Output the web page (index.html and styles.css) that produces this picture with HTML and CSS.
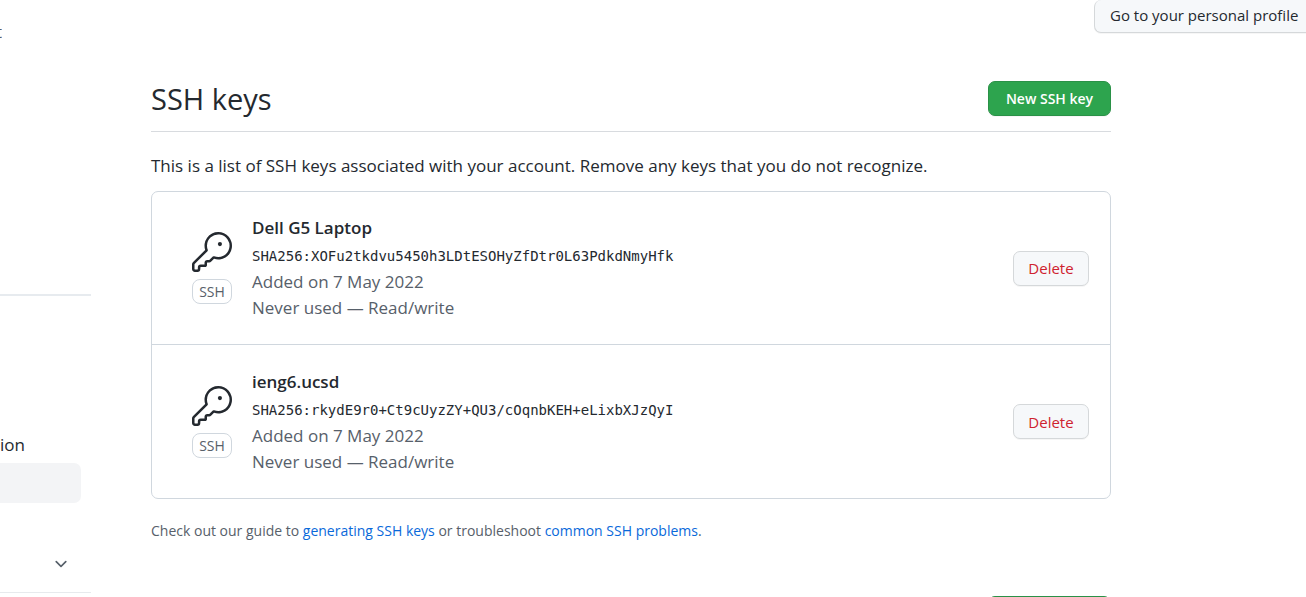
FILE: index.html
```html
<!DOCTYPE html>
<html lang="en">
<head>
<meta charset="utf-8">
<meta name="viewport" content="width=device-width, initial-scale=1">
<title>SSH keys</title>
<link rel="stylesheet" href="styles.css">
</head>
<body>
<header class="profile-bar">
  <span class="profile-note">t</span>
  <button class="btn profile-btn" type="button">Go to your personal profile</button>
</header>
<div class="layout">
  <nav class="sidebar" aria-label="Settings">
    <a class="nav-item" href="#">ion</a>
    <a class="nav-item nav-current" href="#" aria-label="SSH keys" aria-current="page"></a>
    <button class="nav-toggle" type="button" aria-label="Expand section">
      <svg class="chevron" viewBox="0 0 16 16" aria-hidden="true"><path d="M12.78 6.22a.75.75 0 010 1.06l-4.25 4.25a.75.75 0 01-1.06 0L3.22 7.28a.75.75 0 011.06-1.06L8 9.94l3.72-3.72a.75.75 0 011.06 0z"/></svg>
    </button>
  </nav>
  <main class="content">
    <div class="subhead">
      <h1 class="title">SSH keys</h1>
      <button class="btn btn-primary" type="button">New SSH key</button>
    </div>
    <p class="intro">This is a list of SSH keys associated with your account. Remove any keys that you do not recognize.</p>
    <ul class="key-list">
      <li class="key">
        <div class="key-type">
          <svg class="key-icon" viewBox="0 0 24 24" aria-hidden="true"><path d="M16.75 8.5a1.25 1.25 0 100-2.5 1.25 1.25 0 000 2.5z"/><path fill-rule="evenodd" d="M15.75 0a8.25 8.25 0 00-7.851 10.79L.513 18.178A1.75 1.75 0 000 19.414v2.836C0 23.217.784 24 1.75 24h1.5A1.75 1.75 0 005 22.25v-1a.25.25 0 01.25-.25h2.735a.75.75 0 00.545-.22l.214-.213A.875.875 0 009 19.948V18.5a.25.25 0 01.25-.25h1.086c.464 0 .91-.184 1.237-.513l1.636-1.636A8.25 8.25 0 1015.75 0zM9 8.25a6.75 6.75 0 114.288 6.287.75.75 0 00-.804.168l-1.971 1.972a.25.25 0 01-.177.073H9.25A1.75 1.75 0 007.5 18.5v1H5.25a1.75 1.75 0 00-1.75 1.75v1a.25.25 0 01-.25.25h-1.5a.25.25 0 01-.25-.25v-2.836a.25.25 0 01.073-.177l7.722-7.721a.75.75 0 00.168-.804A6.73 6.73 0 019 8.25z"/></svg>
          <span class="label">SSH</span>
        </div>
        <div class="key-info">
          <strong class="key-name">Dell G5 Laptop</strong>
          <code class="key-hash">SHA256:XOFu2tkdvu5450h3LDtESOHyZfDtr0L63PdkdNmyHfk</code>
          <span>Added on 7 May 2022</span>
          <span>Never used — Read/write</span>
        </div>
        <button class="btn btn-danger" type="button">Delete</button>
      </li>
      <li class="key">
        <div class="key-type">
          <svg class="key-icon" viewBox="0 0 24 24" aria-hidden="true"><path d="M16.75 8.5a1.25 1.25 0 100-2.5 1.25 1.25 0 000 2.5z"/><path fill-rule="evenodd" d="M15.75 0a8.25 8.25 0 00-7.851 10.79L.513 18.178A1.75 1.75 0 000 19.414v2.836C0 23.217.784 24 1.75 24h1.5A1.75 1.75 0 005 22.25v-1a.25.25 0 01.25-.25h2.735a.75.75 0 00.545-.22l.214-.213A.875.875 0 009 19.948V18.5a.25.25 0 01.25-.25h1.086c.464 0 .91-.184 1.237-.513l1.636-1.636A8.25 8.25 0 1015.75 0zM9 8.25a6.75 6.75 0 114.288 6.287.75.75 0 00-.804.168l-1.971 1.972a.25.25 0 01-.177.073H9.25A1.75 1.75 0 007.5 18.5v1H5.25a1.75 1.75 0 00-1.75 1.75v1a.25.25 0 01-.25.25h-1.5a.25.25 0 01-.25-.25v-2.836a.25.25 0 01.073-.177l7.722-7.721a.75.75 0 00.168-.804A6.73 6.73 0 019 8.25z"/></svg>
          <span class="label">SSH</span>
        </div>
        <div class="key-info">
          <strong class="key-name">ieng6.ucsd</strong>
          <code class="key-hash">SHA256:rkydE9r0+Ct9cUyzZY+QU3/cOqnbKEH+eLixbXJzQyI</code>
          <span>Added on 7 May 2022</span>
          <span>Never used — Read/write</span>
        </div>
        <button class="btn btn-danger" type="button">Delete</button>
      </li>
    </ul>
    <p class="help">Check out our guide to <a href="#">generating SSH keys</a> or troubleshoot <a href="#">common SSH problems</a>.</p>
    <div class="next-section">
      <button class="btn btn-primary" type="button" aria-label="New key"></button>
    </div>
  </main>
</div>
</body>
</html>
```
FILE: styles.css
```css
* { box-sizing: border-box; }

body {
  margin: 0;
  height: 100vh;
  overflow: hidden;
  background: #fff;
  color: #24292f;
  font-family: "Open Sans", "Noto Sans", sans-serif;
  font-size: 17px;
  line-height: 26px;
}

a { color: #0969da; text-decoration: none; }
p, h1, ul { margin: 0; padding: 0; }

.btn {
  flex: none;
  min-height: 35px;
  padding: 0 14px;
  border: 1px solid #d5d8da;
  border-radius: 7px;
  background: #f6f8fa;
  box-shadow: 0 1px 0 rgba(27, 31, 36, .04);
  color: #24292f;
  font: 500 15px/22px "Open Sans", "Noto Sans", sans-serif;
  white-space: nowrap;
}
.btn-primary { min-width: 123px; border-color: #2a9147; background: #2da44e; color: #fff; font-size: 14px; font-weight: 600; }
.btn-danger { min-width: 76px; color: #cf222e; }

.profile-bar {
  display: flex;
  justify-content: space-between;
  align-items: flex-start;
  height: 46px;
}
.profile-note {
  display: flex;
  justify-content: flex-end;
  width: 2px;
  padding-top: 19px;
  color: #57606a;
  overflow: hidden;
}
.profile-btn {
  width: 212px;
  min-height: 33px;
  padding: 0 8px 2px 15px;
  border-top: 0;
  border-right: 0;
  border-radius: 7px 0 0 7px;
  text-align: left;
}

.layout { display: grid; grid-template-columns: 91px minmax(0, 1fr); column-gap: 60px; }

.sidebar {
  display: flex;
  flex-direction: column;
  margin-top: 248px;
  padding-top: 136px;
  border-top: 2px solid #e7ebef;
  border-bottom: 1px solid #e7eaed;
  align-self: start;
}
.nav-item { height: 31px; color: #24292f; }
.nav-current { height: 40px; margin-right: 10px; border-radius: 0 7px 7px 0; background: #f3f4f6; }
.nav-toggle {
  display: flex;
  justify-content: flex-end;
  margin-top: 51px;
  padding: 0 21px 20px 0;
  border: 0;
  background: none;
}
.chevron { width: 18px; height: 18px; fill: #57606a; }

.content { padding-top: 35px; margin-right: 195px; }
.subhead {
  display: flex;
  justify-content: space-between;
  align-items: center;
  height: 51px;
  padding-bottom: 15px;
  border-bottom: 1px solid #d8dbdf;
}
.title { font-size: 29px; font-weight: 400; line-height: 36px; }
.intro { margin: 21px 0 12px; }

.key-list { border: 1px solid #d0d7de; border-radius: 7px; list-style: none; }
.key {
  display: flex;
  align-items: center;
  min-height: 152px;
  padding: 0 21px 0 40px;
}
.key + .key { min-height: 154px; border-top: 1px solid #d0d7de; }
.key-type { display: flex; flex-direction: column; gap: 7px; width: 40px; margin-right: 20px; }
.key-icon { width: 40px; height: 40px; fill: #24292f; }
.label {
  border: 1px solid #d0d7de;
  border-radius: 8px;
  color: #57606a;
  font-size: 14px;
  line-height: 23px;
  text-align: center;
}
.key-info { display: flex; flex: 1; flex-direction: column; color: #57606a; }
.key-name { color: #24292f; font-weight: 600; }
.key-hash {
  padding-top: 2px;
  color: #24292f;
  font: 14px/26px "DejaVu Sans Mono", "Liberation Mono", monospace;
}

.help { margin-top: 19px; color: #57606a; font-size: 14px; }
.next-section { display: flex; justify-content: flex-end; margin-top: 52px; }
```
